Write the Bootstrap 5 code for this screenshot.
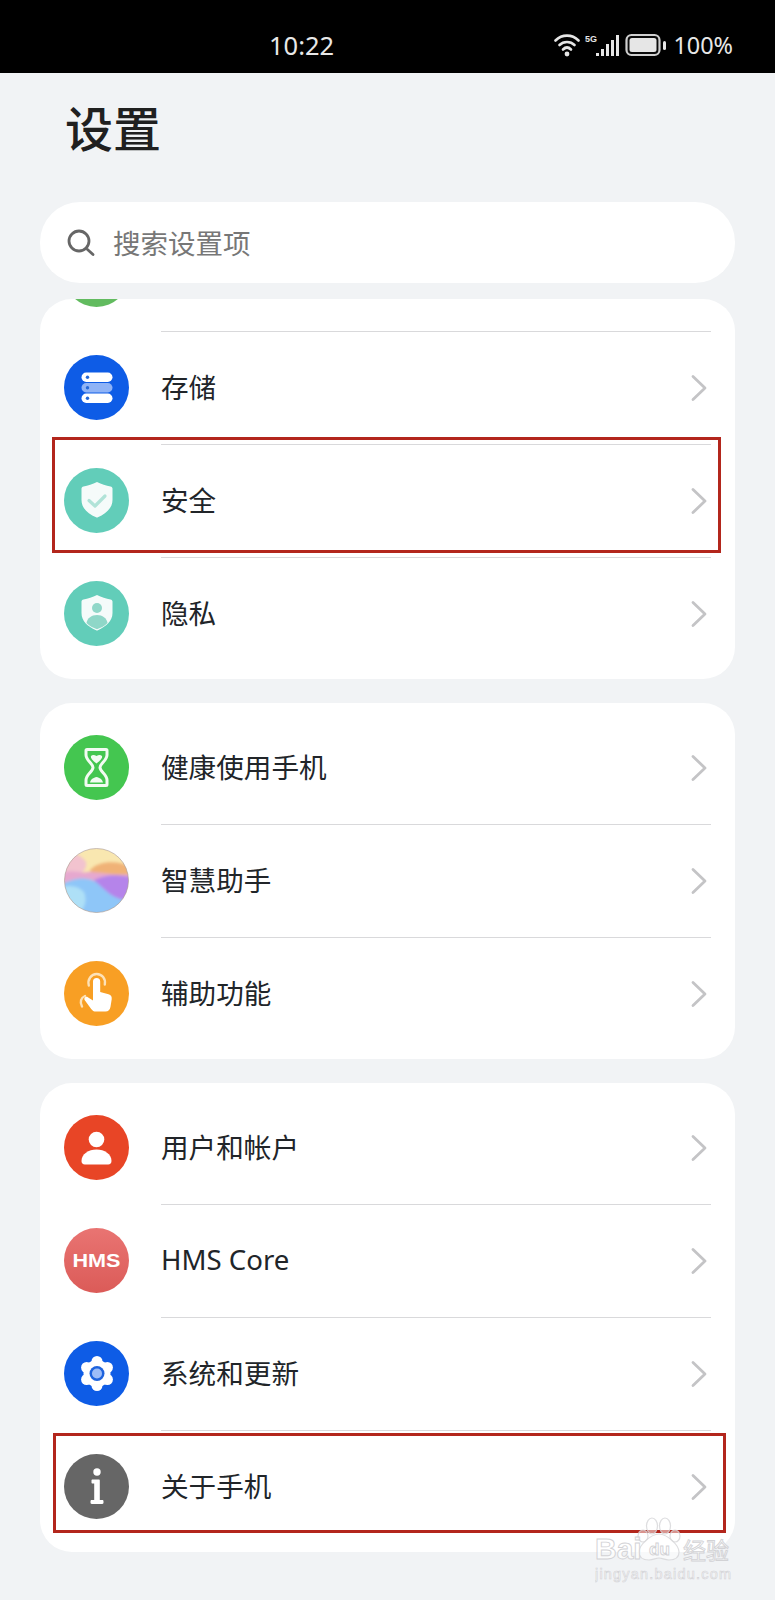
<!doctype html>
<html lang="zh-CN"><head><meta charset="utf-8">
<link href="https://cdn.jsdelivr.net/npm/bootstrap@5.3.0/dist/css/bootstrap.min.css" rel="stylesheet">
<style>
html,body{height:1600px;overflow:hidden}
body{background:#f1f3f5;font-family:"Noto Sans CJK SC","Noto Sans",sans-serif;color:#141414;position:relative}
.sbar{height:73px;background:#000;color:#e8e8e8;line-height:1;padding:33px 42px 0 269px}
.sbar .clock{font-family:"Noto Sans","Noto Sans CJK SC",sans-serif;font-size:25.5px}
.sbar .pct{font-family:"Noto Sans","Noto Sans CJK SC",sans-serif;font-size:23.4px;margin-left:3px}
.ttl{font-size:48px;font-weight:500;line-height:1;margin:0;padding:29px 0 0 65px;height:129px;color:#202020}
.sfield{height:81px;margin:0 40px;background:#fff;border-radius:40px;padding-left:27px;color:#777;font-size:27.5px;gap:18px}
.panel{margin:24px 40px 0;border-radius:32px;border:0;overflow:hidden;padding:8px 0 9px;background:#fff}
.panel.firstp{margin-top:16px}
.rowi{padding:0 24px;border:0;background:transparent;position:relative;height:113px;display:flex;align-items:center}
.rowi.cut{margin-top:-89px}
.disc{width:65px;height:65px;flex:none;display:block}
.lbl{margin-left:32px;height:113px;flex:1;display:flex;align-items:center;justify-content:space-between;font-size:27.6px;line-height:1;padding-right:3px}
.lbl > span{margin-bottom:2px}
.lbl.sep{border-top:1px solid #d9d9db}
.lbl .latin{font-family:"Noto Sans","Noto Sans CJK SC",sans-serif}
.chev{width:18px;height:28px;flex:none;display:block}
.mark-box{position:absolute;border:3px solid #b3261c;pointer-events:none}
.mb1{left:12px;right:14px;top:-7px;height:116px}
.mb2{left:13px;right:9px;top:3px;height:100px}
.wm{position:absolute;left:595px;top:1516px;width:140px;pointer-events:none}
.wm svg{display:block}
</style></head><body>
<div class="sbar d-flex align-items-start justify-content-between">
  <span class="clock">10:22</span>
  <span class="d-flex align-items-center">
    <svg width="116" height="26" viewBox="0 0 116 26" class="d-block">
      <g fill="none" stroke="#e6e6e6" stroke-width="2.6" stroke-linecap="round"><path d="M1.500 7.500C8 1 18 1 24.500 7.500"/><path d="M5.500 12C9.500 8 16.500 8 20.500 12"/><path d="M9 16.500C11.500 14 14.500 14 17 16.500"/></g>
      <circle cx="13" cy="21" r="2.400" fill="#e6e6e6"/>
      <text x="31" y="9" font-size="9" font-weight="700" fill="#e6e6e6" font-family="Liberation Sans">5G</text>
      <g fill="#e6e6e6"><rect x="42" y="20" width="3" height="3"/><rect x="47" y="16" width="3" height="7"/><rect x="52" y="11" width="3" height="12"/><rect x="57" y="7" width="3" height="16"/><rect x="62" y="2" width="3" height="21"/></g>
      <rect x="72.500" y="2" width="33" height="20" rx="5" fill="#0a0a0a" stroke="#cfcfcf" stroke-width="2.200"/><rect x="75.500" y="5" width="27" height="14" rx="2.500" fill="#e6e6e6"/><rect x="109" y="8" width="3" height="9" rx="1.500" fill="#e6e6e6"/>
    </svg>
    <span class="pct">100%</span>
  </span>
</div>
<h1 class="ttl">设置</h1>
<div class="sfield d-flex align-items-center">
  <svg width="28" height="28" viewBox="0 0 28 28" class="d-block flex-none"><circle cx="12" cy="12" r="10" fill="none" stroke="#666" stroke-width="2.800"/><path d="M20.500 20.500l5.500 5" stroke="#666" stroke-width="2.800" stroke-linecap="round"/></svg>
  <span>搜索设置项</span>
</div>
<svg width="0" height="0" class="position-absolute"><defs>
<symbol id="cv" viewBox="0 0 18 28"><path d="M3 2.500 15 14 3 25.500" fill="none" stroke="#c4c4c6" stroke-width="2.800" stroke-linecap="round" stroke-linejoin="round"/></symbol>
<linearGradient id="hmsg" x1="0" y1="0" x2="0" y2="1"><stop offset="0" stop-color="#e97472"/><stop offset="1" stop-color="#db5b58"/></linearGradient>
<clipPath id="cc"><circle cx="32.500" cy="32.500" r="32"/></clipPath>
<filter id="sft" x="-20%" y="-20%" width="140%" height="140%"><feGaussianBlur stdDeviation="1.600"/></filter>
<path id="shld" d="M33 14c4.500 2.400 9 3.800 13.500 4.400 1.200.2 2 1 2 2.200V32c0 8-6.500 13.500-14.600 17.300-.6.300-1.200.3-1.800 0C23.500 45.500 17.500 40 17.500 32V20.600c0-1.200.8-2 2-2.200C24 17.800 28.500 16.400 33 14Z" fill="#f5fbfa"/>
</defs></svg>
<div class="card panel firstp"><div class="list-group list-group-flush">
  <div class="list-group-item rowi cut">
    <svg class="disc" viewBox="0 0 65 65"><circle cx="32.500" cy="32.500" r="32.500" fill="#62bb5f"/></svg>
    <div class="lbl"></div>
  </div>
  <div class="list-group-item rowi">
    <svg class="disc" viewBox="0 0 65 65"><circle cx="32.500" cy="32.500" r="32.500" fill="#0e5ce6"/>
      <rect x="17.500" y="17.500" width="31" height="9.500" rx="4.700" fill="#fff"/><rect x="17.500" y="28" width="31" height="9.500" rx="4.700" fill="#8fb3f6"/><rect x="17.500" y="38.500" width="31" height="9.500" rx="4.700" fill="#fff"/>
      <g fill="#2468d8"><circle cx="23.500" cy="22.200" r="1.700"/><circle cx="23.500" cy="32.700" r="1.700"/><circle cx="23.500" cy="43.200" r="1.700"/></g></svg>
    <div class="lbl sep"><span>存储</span><svg class="chev"><use href="#cv"/></svg></div>
  </div>
  <div class="list-group-item rowi">
    <svg class="disc" viewBox="0 0 65 65"><circle cx="32.500" cy="32.500" r="32.500" fill="#62cdb9"/>
      <use href="#shld"/>
      <path d="M25 32.500l6 5.500 10-10" fill="none" stroke="#b0e3d8" stroke-width="3.200" stroke-linecap="round" stroke-linejoin="round"/></svg>
    <div class="lbl sep"><span>安全</span><svg class="chev"><use href="#cv"/></svg></div>
    <div class="mark-box mb1"></div>
  </div>
  <div class="list-group-item rowi">
    <svg class="disc" viewBox="0 0 65 65"><circle cx="32.500" cy="32.500" r="32.500" fill="#62cdb9"/>
      <use href="#shld"/>
      <circle cx="33" cy="27" r="5" fill="#8fd7c8"/><path d="M22.500 42c.8-5 5-8 10.500-8s9.700 3 10.500 8c-2.800 2.800-6.500 4.800-10.500 6.300-4-1.500-7.700-3.500-10.500-6.300Z" fill="#8fd7c8"/></svg>
    <div class="lbl sep"><span>隐私</span><svg class="chev"><use href="#cv"/></svg></div>
  </div>
</div></div>
<div class="card panel"><div class="list-group list-group-flush">
  <div class="list-group-item rowi">
    <svg class="disc" viewBox="0 0 65 65"><circle cx="32.500" cy="32.500" r="32.500" fill="#44c650"/>
      <path d="M23 14.500h19c.8 0 1 .5 1 1V20c0 5.500-7 8.500-7 12.500S43 39.500 43 45v4.500c0 .5-.2 1-1 1H23c-.8 0-1-.5-1-1V45c0-5.500 7-8.500 7-12.500S22 25.500 22 20v-4.500c0-.5.2-1 1-1Z" fill="none" stroke="#f2fbf2" stroke-width="3" stroke-linejoin="round"/>
      <path d="M27 21c1.500-1.500 3.500-1.200 5.500 0 2-1.200 4-1.500 5.500 0 .8 2.500-3 5.500-5.500 7.500-2.500-2-6.300-5-5.500-7.500ZM26 47.500c.5-3 3.500-5 6.500-5.500 3 .5 6 2.500 6.500 5.500Z" fill="#f2fbf2"/></svg>
    <div class="lbl"><span>健康使用手机</span><svg class="chev"><use href="#cv"/></svg></div>
  </div>
  <div class="list-group-item rowi">
    <svg class="disc" viewBox="0 0 65 65"><g clip-path="url(#cc)"><rect width="65" height="65" fill="#f9e7b0"/>
      <g filter="url(#sft)">
      <path d="M-5 8C6 2 16 6 22 14 24 24 12 30-5 30Z" fill="#f2c3cf"/>
      <path d="M26 22C36 12 54 12 70 20V38H30Z" fill="#f0b277"/>
      <path d="M-5 26C8 20 16 26 24 24 36 24 50 28 70 26V50H-5Z" fill="#e6a8cf"/>
      <path d="M30 32C42 26 56 26 70 30V58H46C42 46 36 40 30 32Z" fill="#b584ea"/>
      <path d="M-5 38C8 30 22 28 32 34 42 42 50 54 70 52V70H-5Z" fill="#8ec6f8"/>
      <path d="M-5 40C6 36 14 38 20 44 24 54 20 62 10 70H-5Z" fill="#aee0f7"/>
      </g></g>
      <circle cx="32.500" cy="32.500" r="32" fill="none" stroke="#a99a9a" stroke-opacity=".6"/></svg>
    <div class="lbl sep"><span>智慧助手</span><svg class="chev"><use href="#cv"/></svg></div>
  </div>
  <div class="list-group-item rowi">
    <svg class="disc" viewBox="0 0 65 65"><circle cx="32.500" cy="32.500" r="32.500" fill="#f89f24"/>
      <path d="M29 30V20.500a3.600 3.600 0 0 1 7.200 0V31l8.300 2.200c2.600.7 3.500 2.600 3.200 5l-1.200 7.500c-.4 3-2.300 4.800-5 4.800H32c-2.200 0-3.600-.9-4.800-2.600l-6.400-8.700c-1.400-2 .9-4.400 3-3l5.200 3.300Z" fill="#fff"/>
      <path d="M24.800 24.500c-1.600-6 2.500-11.500 7.900-11.500 5.200 0 9.300 4.800 8.100 10.500" fill="none" stroke="#fde2b8" stroke-width="2.400" stroke-linecap="round"/>
      <path d="M21 35c-4 1.500-5.500 6-3 10.500" fill="none" stroke="#fde2b8" stroke-width="2.400" stroke-linecap="round"/></svg>
    <div class="lbl sep"><span>辅助功能</span><svg class="chev"><use href="#cv"/></svg></div>
  </div>
</div></div>
<div class="card panel"><div class="list-group list-group-flush">
  <div class="list-group-item rowi">
    <svg class="disc" viewBox="0 0 65 65"><circle cx="32.500" cy="32.500" r="32.500" fill="#e84526"/>
      <circle cx="32.500" cy="24.500" r="7.800" fill="#fff"/><path d="M17.500 46c0-7 7-11.500 15-11.500S47.500 39 47.500 46c0 2.200-1.300 3.500-3.300 3.500H20.800c-2 0-3.300-1.300-3.300-3.500Z" fill="#fff"/></svg>
    <div class="lbl"><span>用户和帐户</span><svg class="chev"><use href="#cv"/></svg></div>
  </div>
  <div class="list-group-item rowi">
    <svg class="disc" viewBox="0 0 65 65"><circle cx="32.500" cy="32.500" r="32.500" fill="url(#hmsg)"/>
      <text x="8.500" y="38.800" textLength="48" lengthAdjust="spacingAndGlyphs" fill="#fff" font-family="Liberation Sans,sans-serif" font-weight="700" font-size="17.500">HMS</text></svg>
    <div class="lbl sep"><span class="latin">HMS Core</span><svg class="chev"><use href="#cv"/></svg></div>
  </div>
  <div class="list-group-item rowi">
    <svg class="disc" viewBox="0 0 65 65"><circle cx="32.500" cy="32.500" r="32.500" fill="#0e5ce6"/>
      <g fill="#fff"><circle cx="33" cy="32.500" r="13.500"/><circle cx="33" cy="20.500" r="5.500"/><circle cx="43.400" cy="26.500" r="5.500"/><circle cx="43.400" cy="38.500" r="5.500"/><circle cx="33" cy="44.500" r="5.500"/><circle cx="22.600" cy="38.500" r="5.500"/><circle cx="22.600" cy="26.500" r="5.500"/></g>
      <circle cx="33" cy="32.500" r="7.500" fill="#1e63dd"/><circle cx="33" cy="32.500" r="5" fill="#9dbdf8"/></svg>
    <div class="lbl sep"><span>系统和更新</span><svg class="chev"><use href="#cv"/></svg></div>
  </div>
  <div class="list-group-item rowi">
    <svg class="disc" viewBox="0 0 65 65"><circle cx="32.500" cy="32.500" r="32.500" fill="#666"/>
      <circle cx="33" cy="18" r="3.700" fill="#fff"/><path d="M28.500 25.500h6.300c.6 0 1 .4 1 1V46h2.500c.7 0 1.200.5 1.200 1.200v1.600c0 .7-.5 1.200-1.200 1.200H27.700c-.7 0-1.200-.5-1.200-1.200v-1.600c0-.7.500-1.200 1.200-1.200h2.500V29.500h-1.700c-.6 0-1-.4-1-1v-2c0-.6.4-1 1-1Z" fill="#fff"/></svg>
    <div class="lbl sep"><span>关于手机</span><svg class="chev"><use href="#cv"/></svg></div>
    <div class="mark-box mb2"></div>
  </div>
</div></div>
<div class="wm"><svg width="140" height="68" viewBox="0 0 140 68">
  <g fill="#fff" fill-opacity=".5" stroke="#d4d4d7" stroke-opacity=".8" stroke-width="1.200"><ellipse cx="57" cy="10" rx="5.500" ry="8"/><ellipse cx="70" cy="10" rx="5.500" ry="8"/><ellipse cx="48" cy="20" rx="5" ry="6"/><ellipse cx="80" cy="20" rx="5" ry="6"/><path d="M64 18c8 0 20 11 20 18 0 6-5 8-10 8-4 0-7-2-10-2s-6 2-10 2c-5 0-10-2-10-8 0-7 12-18 20-18Z"/></g>
  <g font-family="Liberation Sans,sans-serif" fill="#fff" fill-opacity=".7" stroke="#d2d2d5" stroke-width=".9">
    <text x="0" y="43" font-size="30" font-weight="700">Bai</text>
    <text x="54" y="39" font-size="17" font-weight="700">du</text>
    <text x="88" y="43" font-size="23" font-family="Noto Sans CJK SC,sans-serif">经验</text>
    <text x="0" y="63" font-size="14.500" textLength="136" stroke-width=".6">jingyan.baidu.com</text>
  </g></svg></div>
<script src="https://cdn.jsdelivr.net/npm/bootstrap@5.3.0/dist/js/bootstrap.bundle.min.js"></script>
</body></html>
